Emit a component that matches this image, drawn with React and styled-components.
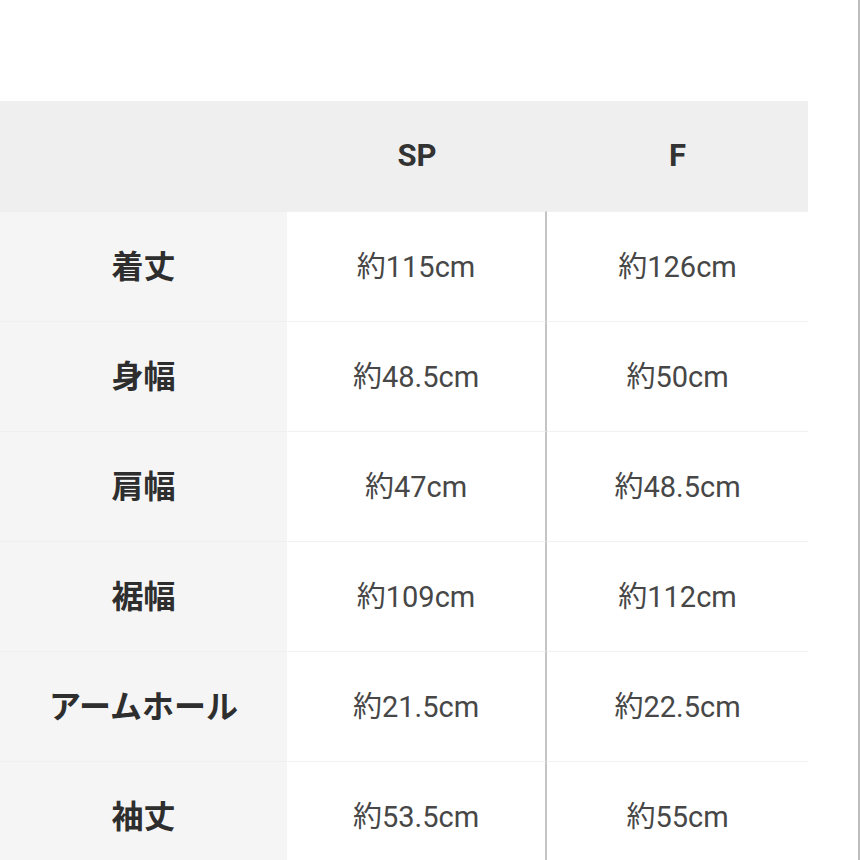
import { Fragment } from "react";
import styled, { createGlobalStyle } from "styled-components";

const GlobalStyle = createGlobalStyle`
  html, body {
    margin: 0;
    padding: 0;
    background: #fff;
  }
  body {
    font-family: Roboto, "Noto Sans CJK JP", sans-serif;
  }
`;

const Page = styled.div`
  width: 860px;
  height: 860px;
  box-sizing: border-box;
  border-right: 2px solid #bdbdbd;
  padding-top: 101px;
  overflow: hidden;
  background: #fff;
`;

const Table = styled.div`
  width: 808px;
  display: grid;
  grid-template-columns: 287px 260px 261px;
  grid-auto-rows: 110px;
`;

const HeadCell = styled.div`
  background: #efefef;
  display: flex;
  align-items: center;
  justify-content: center;
  font-size: 31px;
  font-weight: 700;
  color: #333;
  padding-bottom: 2px;
`;

const LabelCell = styled.div`
  background: #f5f5f5;
  display: flex;
  align-items: center;
  justify-content: center;
  font-size: 32px;
  font-weight: 700;
  color: #2e2e2e;
  border-top: 1px solid #efefef;
  box-sizing: border-box;
  padding-bottom: 6px;
`;

const ValueCell = styled.div`
  background: #fff;
  display: flex;
  align-items: center;
  justify-content: center;
  font-size: 29px;
  color: #474747;
  border-top: 1px solid #f1f1f1;
  border-right: ${(p) => (p.$divider ? "2px solid #c4c4c4" : "none")};
  box-sizing: border-box;
  padding-bottom: 5px;
`;

const rows = [
  ["着丈", "約115cm", "約126cm"],
  ["身幅", "約48.5cm", "約50cm"],
  ["肩幅", "約47cm", "約48.5cm"],
  ["裾幅", "約109cm", "約112cm"],
  ["アームホール", "約21.5cm", "約22.5cm"],
  ["袖丈", "約53.5cm", "約55cm"],
];

export default function App() {
  return (
    <>
      <GlobalStyle />
      <Page>
        <Table>
          <HeadCell />
          <HeadCell>SP</HeadCell>
          <HeadCell>F</HeadCell>
          {rows.map(([label, sp, f]) => (
            <Fragment key={label}>
              <LabelCell>{label}</LabelCell>
              <ValueCell $divider>{sp}</ValueCell>
              <ValueCell>{f}</ValueCell>
            </Fragment>
          ))}
        </Table>
      </Page>
    </>
  );
}
